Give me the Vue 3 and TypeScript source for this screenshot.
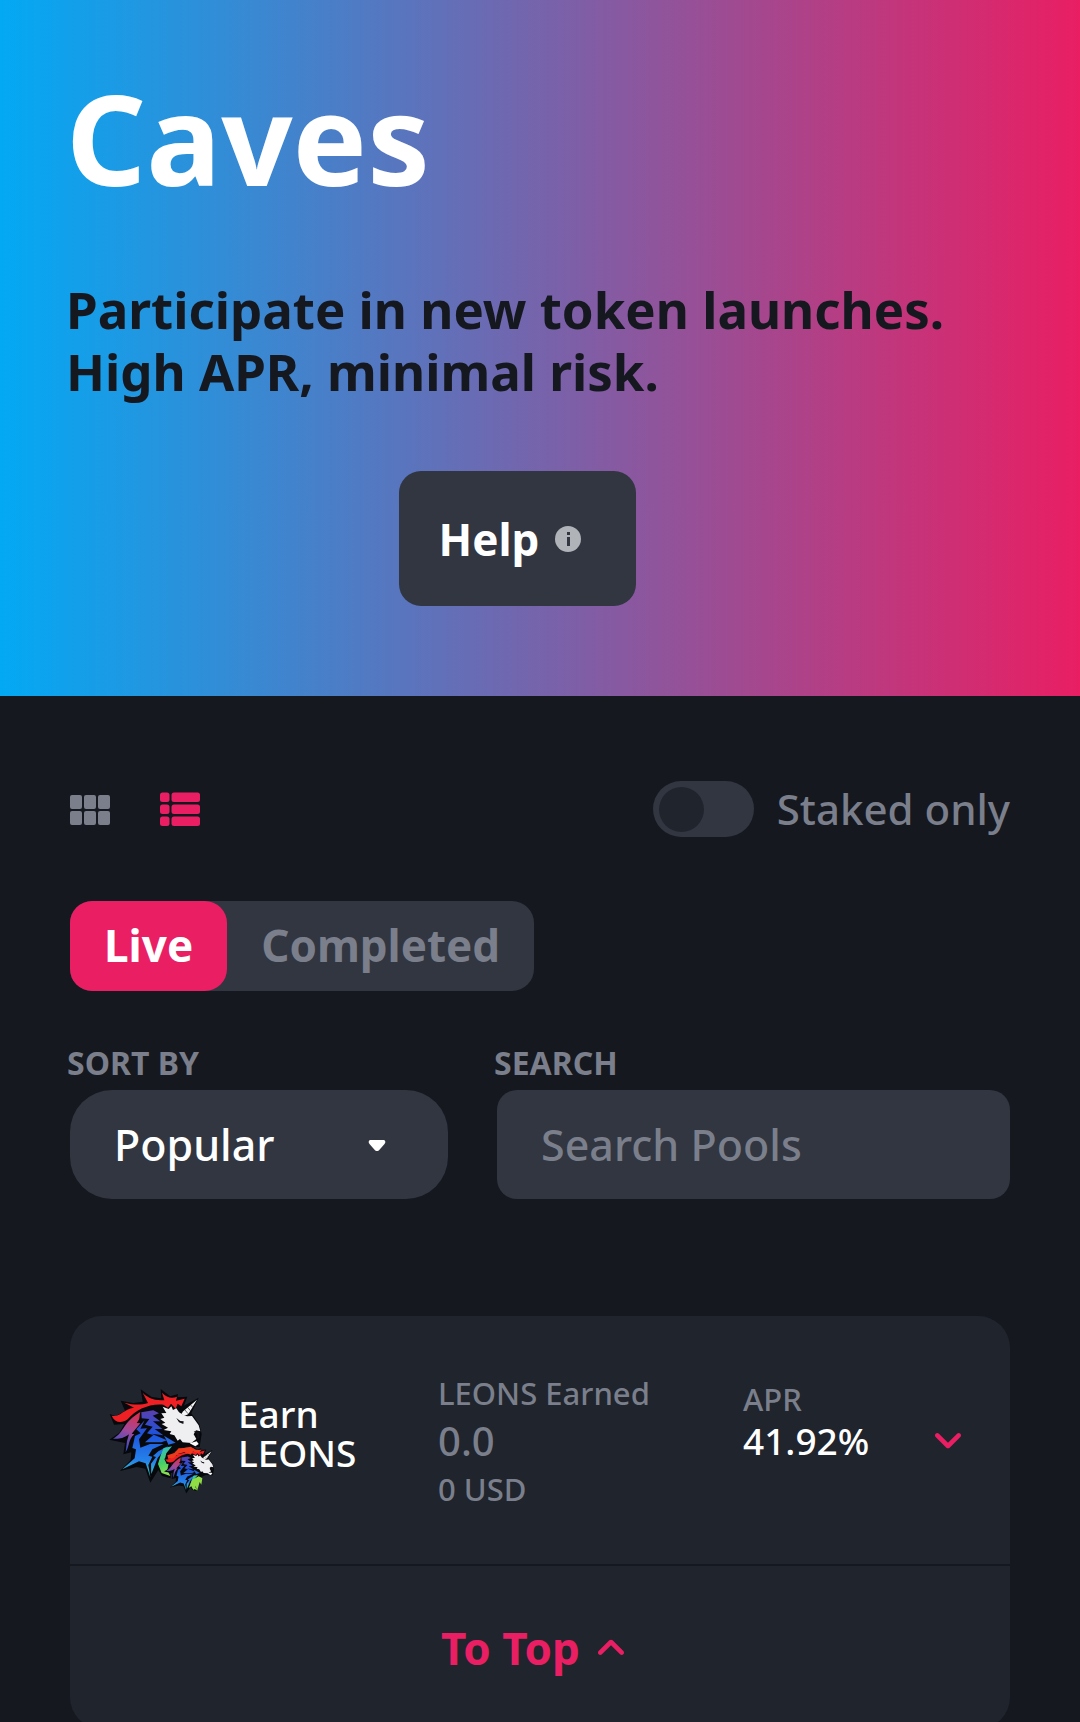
<script setup lang="ts">
import { ref } from 'vue'

type View = 'card' | 'list'
type Status = 'Live' | 'Completed'

interface Pool {
  token: string
  earned: string
  usd: string
  apr: string
}

const view = ref<View>('list')
const status = ref<Status>('Live')
const statuses: Status[] = ['Live', 'Completed']
const stakedOnly = ref(false)
const sort = ref('Popular')
const sortOptions = ['Popular', 'APR', 'Earned', 'Total staked']
const search = ref('')
const pools: Pool[] = [{ token: 'LEONS', earned: '0.0', usd: '0 USD', apr: '41.92%' }]

function toTop() {
  window.scrollTo({ top: 0, behavior: 'smooth' })
}
</script>

<template>
  <div class="page">
    <header class="hero">
      <h1>Caves</h1>
      <p class="tagline">Participate in new token launches.<br>High APR, minimal risk.</p>
      <button class="help" type="button">
        Help
        <svg width="26" height="26" viewBox="0 0 26 26" aria-hidden="true">
          <circle cx="13" cy="13" r="13" fill="#b0b4b9" />
          <path d="M12 6h3v3h-3zM12 11h3v9h-3z" fill="#313641" />
        </svg>
      </button>
    </header>

    <main>
      <div class="toolbar">
        <div class="views">
          <button type="button" aria-label="Card view" :class="{ on: view === 'card' }" @click="view = 'card'">
            <svg width="40" height="34" viewBox="0 0 40 34">
              <rect v-for="i in 6" :key="i" :x="((i - 1) % 3) * 14" :y="i > 3 ? 19 : 3" width="12" height="14" rx="2" />
            </svg>
          </button>
          <button type="button" aria-label="List view" :class="{ on: view === 'list' }" @click="view = 'list'">
            <svg width="40" height="34" viewBox="0 0 40 34">
              <template v-for="i in 3" :key="i">
                <rect x="0" :y="i * 12 - 11.5" width="9.5" height="9.5" rx="2.5" />
                <rect x="11.5" :y="i * 12 - 11.5" width="28.5" height="9.5" rx="2.5" />
              </template>
            </svg>
          </button>
        </div>
        <label class="staked">
          <input v-model="stakedOnly" type="checkbox">
          Staked only
        </label>
      </div>

      <div class="tabs">
        <button v-for="s in statuses" :key="s" type="button" :class="{ active: status === s }" @click="status = s">{{ s }}</button>
      </div>

      <div class="filters">
        <div class="field sort">
          <label for="sort">SORT BY</label>
          <div class="select">
            <select id="sort" v-model="sort">
              <option v-for="o in sortOptions" :key="o">{{ o }}</option>
            </select>
            <svg width="18" height="12" viewBox="0 0 18 12" aria-hidden="true">
              <path d="M3 0h12c2.400 0 3 2.200 1.500 4l-5.500 6.200q-2 1.800-4 0L1.500 4C0 2.200.6 0 3 0z" fill="#fff" />
            </svg>
          </div>
        </div>
        <div class="field search">
          <label for="search">SEARCH</label>
          <input id="search" v-model="search" type="text" placeholder="Search Pools">
        </div>
      </div>

      <section class="card">
        <article v-for="p in pools" :key="p.token" class="pool">
          <div class="name">
            <svg width="108" height="108" viewBox="54 48 324 324" aria-hidden="true">
              <defs>
                <linearGradient id="mane-a" gradientUnits="userSpaceOnUse" x1="140" y1="130" x2="90" y2="235">
                  <stop offset="0" stop-color="#d92f4d" />
                  <stop offset=".5" stop-color="#a0499b" />
                  <stop offset="1" stop-color="#2b50c8" />
                </linearGradient>
                <linearGradient id="mane-b" gradientUnits="userSpaceOnUse" x1="180" y1="120" x2="170" y2="325">
                  <stop offset="0" stop-color="#5b3fae" />
                  <stop offset=".35" stop-color="#1d53dc" />
                  <stop offset=".75" stop-color="#2583ea" />
                  <stop offset="1" stop-color="#35dfc0" />
                </linearGradient>
                <linearGradient id="mane-c" gradientUnits="userSpaceOnUse" x1="205" y1="235" x2="238" y2="320">
                  <stop offset="0" stop-color="#36bdc1" />
                  <stop offset=".5" stop-color="#45cf68" />
                  <stop offset="1" stop-color="#a1e64a" />
                </linearGradient>
                <g id="unicorn-lion">
                  <path fill="#07080c" d="M59 132L77 139 105 122 92 92 130 99 158 95 152 58 185 81 214 85 212 57 241 79 264 72 262 82 292 80 282 107 326 83 304 130 328 163 335 192 329 231 290 230 246 248 242 325 216 318 205 300 181 338 166 296 140 291 90 303 122 270 124 247 100 253 105 219 58 209 88 188 103 162 72 164z" />
                  <path fill="#ee2023" d="M65 137C90 143 97 119 132 113L103 98C132 106 153 105 174 99L158 68C176 87 197 91 223 91L216 68C231 84 246 86 261 80L258 92 284 86 274 109 263 101 257 116 243 101 234 113 220 104C178 100 137 119 113 148 94 162 74 158 65 137z" />
                  <path fill="url(#mane-a)" d="M151 126C146 143 153 143 140 159L151 160 125 191 133 193C113 210 121 225 107 246L111 213 117 193C97 208 82 207 69 206 105 186 97 158 151 126z" />
                  <path fill="url(#mane-b)" d="M154 127L190 121 207 130 188 137 211 154 189 154 217 177 194 177 220 196 185 191 231 211 214 217 165 217 190 195 171 190 188 170 165 164 178 147 155 145z" />
                  <path fill="url(#mane-b)" d="M164 151L151 176 171 175 147 208 151 233 180 222 221 222 187 238 175 257 187 260 175 285 181 321 167 280 147 274 97 298 134 265 138 238 127 234 135 198 152 190 139 178z" />
                  <path fill="url(#mane-b)" d="M235 228L205 244 189 258 198 261 183 281 184 312 203 264 218 246z" />
                  <path fill="url(#mane-c)" d="M221 234L246 229 229 250 224 270 236 280 232 300 241 318 215 309 204 282 212 256z" />
                  <path fill="#2768df" d="M222 197L257 218 235 224 229 210z" />
                  <path fill="#efeff1" d="M218 110L236 117 244 109 249 120 259 115 267 127 277 133 291 139 306 138 326 166 331 184 318 181 311 193 319 207 304 219 278 217 270 207 263 212 253 196 239 192 244 184 221 180 234 173 215 162 226 158 211 147 223 143 214 130 229 129z" />
                  <path fill="#f5f5f5" d="M274 133Q278 122 285 119L321 89 297 129Q290 140 274 133z" />
                  <path fill="none" stroke="#202126" stroke-width="2" d="M284 119L294 131M293 112L301 122M302 105L308 112" />
                  <path fill="#111217" d="M259 144L271 153 281 154 280 162 267 157zM311 184L329 185 328 204 322 207 321 193z" />
                  <path fill="#fff" d="M299 220L320 214 326 222 316 229z" />
                </g>
              </defs>
              <use href="#unicorn-lion" />
              <use href="#unicorn-lion" transform="translate(191 198) scale(.54 .51)" />
              <path fill="#ed3a1c" d="M232 256L253 249 266 235 282 234 302 230 316 239 334 240 324 249 309 244 302 254 285 246 265 251 250 264 235 267z" />
              <path fill="#8fdc45" d="M307 329L326 319 337 325 334 344 329 336 321 364 317 347 311 361 305 348 296 354z" />
            </svg>
            <h2>Earn<br>{{ p.token }}</h2>
          </div>
          <div class="earned">
            <span>{{ p.token }} Earned</span>
            <span class="amount">{{ p.earned }}</span>
            <span>{{ p.usd }}</span>
          </div>
          <div class="apr">
            <span>APR</span>
            <strong>{{ p.apr }}</strong>
          </div>
          <button type="button" aria-label="Show details">
            <svg width="56" height="56" viewBox="0 0 24 24">
              <path d="M8.120 9.290L12 13.170 15.880 9.290C16.270 8.900 16.900 8.900 17.290 9.290 17.680 9.680 17.680 10.310 17.290 10.700L12.700 15.290C12.310 15.680 11.680 15.680 11.290 15.290L6.700 10.700C6.310 10.310 6.310 9.680 6.700 9.290 7.090 8.910 7.730 8.900 8.120 9.290Z" />
            </svg>
          </button>
        </article>
        <button class="to-top" type="button" @click="toTop">
          To Top
          <svg width="56" height="56" viewBox="0 0 24 24" aria-hidden="true">
            <path d="M8.120 14.710L12 10.830 15.880 14.710C16.270 15.100 16.900 15.100 17.290 14.710 17.680 14.320 17.680 13.690 17.290 13.300L12.700 8.710C12.310 8.320 11.680 8.320 11.290 8.710L6.700 13.300C6.310 13.690 6.310 14.320 6.700 14.710 7.090 15.090 7.730 15.100 8.120 14.710Z" />
          </svg>
        </button>
      </section>
    </main>
  </div>
</template>

<style>
html {
  background: #15181f;
  scrollbar-width: none;
}

body {
  margin: 0;
}
</style>

<style scoped>
* {
  box-sizing: border-box;
}

.page {
  min-height: 100vh;
  background: #15181f;
  color: #fff;
  font-family: "Noto Sans", "Open Sans", sans-serif;
  font-weight: 500;
}

button,
input,
select {
  border: 0;
  font: inherit;
  color: inherit;
}

button {
  padding: 0;
  background: none;
  cursor: pointer;
}

svg {
  display: block;
  flex: none;
}

.hero {
  display: flex;
  flex-direction: column;
  padding: 68px 112px 90px 66px;
  background: linear-gradient(90deg, #03a9f4, #e91e63);
}

h1 {
  margin: 0;
  font-size: 125px;
  line-height: 140px;
  font-weight: 700;
}

.tagline {
  margin: 70px 0 0;
  color: #15181f;
  font-size: 51px;
  line-height: 62px;
  font-weight: 700;
}

.help {
  display: flex;
  align-items: center;
  gap: 16px;
  align-self: center;
  min-width: 237px;
  height: 135px;
  margin-top: 69px;
  padding: 0 40px;
  border-radius: 22px;
  background: #313641;
  font-size: 44px;
  font-weight: 700;
}

main {
  padding: 85px 70px 0;
}

.toolbar {
  display: flex;
  align-items: center;
  justify-content: space-between;
}

.views {
  display: flex;
  gap: 50px;
  fill: #7a7f8b;
}

.views .on {
  fill: #e91e63;
}

.staked {
  display: flex;
  align-items: center;
  gap: 23px;
  color: #7a7f8b;
  font-size: 42px;
  line-height: 56px;
}

.staked input {
  appearance: none;
  display: flex;
  align-items: center;
  width: 101px;
  height: 56px;
  margin: 0;
  padding: 0 6px;
  border-radius: 28px;
  background: #313641;
}

.staked input::before {
  content: "";
  width: 45px;
  height: 45px;
  border-radius: 50%;
  background: #20242d;
}

.staked input:checked {
  justify-content: flex-end;
  background: #e91e63;
}

.tabs {
  display: flex;
  width: fit-content;
  margin-top: 64px;
  border-radius: 22px;
  background: #313641;
}

.tabs button {
  height: 90px;
  padding: 0 34px 2px;
  border-radius: 22px;
  color: #7a7f8b;
  font-size: 44px;
  font-weight: 700;
}

.tabs .active {
  background: #e91e63;
  color: #fff;
}

.filters {
  display: flex;
  gap: 49px;
  margin-top: 52px;
}

.field {
  display: flex;
  flex-direction: column;
  gap: 7px;
  min-width: 0;
}

.field label {
  margin-left: -3px;
  color: #7a7f8b;
  font-size: 32px;
  line-height: 40px;
  font-weight: 700;
}

.sort {
  flex: 378;
}

.search {
  flex: 513;
}

.select {
  position: relative;
}

.select svg {
  position: absolute;
  top: 50%;
  right: 62px;
  margin-top: -5px;
  pointer-events: none;
}

.field select,
.field input {
  appearance: none;
  display: block;
  width: 100%;
  height: 109px;
  padding: 0 44px;
  background: #313641;
  font-size: 43px;
}

.field select {
  border-radius: 42px;
}

.field input {
  border-radius: 20px;
}

.field input::placeholder {
  color: #7a7f8b;
  opacity: 1;
}

.card {
  margin-top: 117px;
  border-radius: 32px;
  background: #20242d;
}

.pool {
  display: grid;
  grid-template-columns: 330fr 305fr 177fr 56px;
  align-items: center;
  min-height: 250px;
  padding: 0 34px 0 38px;
  border-bottom: 2px solid #15181f;
}

.name {
  display: flex;
  align-items: center;
  gap: 22px;
}

h2 {
  margin: 0;
  padding-bottom: 14px;
  font-size: 37px;
  line-height: 39px;
  font-weight: 500;
}

.earned,
.apr {
  display: flex;
  flex-direction: column;
  color: #7a7f8b;
  font-size: 31px;
  line-height: 48px;
}

.earned {
  padding-top: 2px;
}

.earned .amount {
  font-size: 40px;
}

.apr {
  padding-bottom: 40px;
  line-height: 41px;
}

.apr strong {
  color: #fff;
  font-size: 37px;
  font-weight: 500;
}

.pool button,
.to-top {
  color: #e91e63;
  fill: #e91e63;
}

.to-top {
  display: flex;
  align-items: center;
  justify-content: center;
  gap: 3px;
  width: 100%;
  height: 163px;
  font-size: 44px;
  font-weight: 700;
}
</style>
